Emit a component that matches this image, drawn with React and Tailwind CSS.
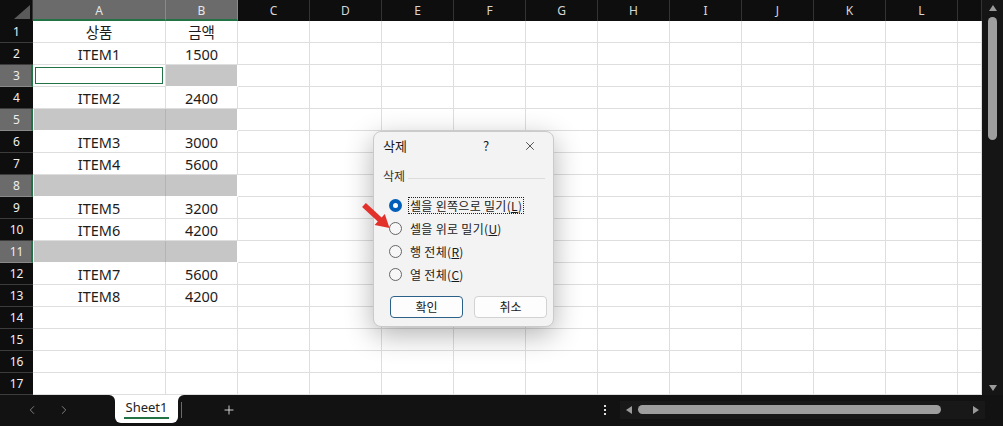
import React from "react";
import { ChevronLeft, ChevronRight, Plus, X } from "lucide-react";

const COLS = ["A", "B", "C", "D", "E", "F", "G", "H", "I", "J", "K", "L", ""];
const DATA = {
  1: ["상품", "금액"],
  2: ["ITEM1", "1500"],
  4: ["ITEM2", "2400"],
  6: ["ITEM3", "3000"],
  7: ["ITEM4", "5600"],
  9: ["ITEM5", "3200"],
  10: ["ITEM6", "4200"],
  12: ["ITEM7", "5600"],
  13: ["ITEM8", "4200"],
};
const SEL = [3, 5, 8, 11];
const ROWS = Array.from({ length: 17 }, (_, i) => i + 1);

function Cell({ r, c }) {
  const sel = SEL.includes(r) && c < 2;
  if (sel && r === 3 && c === 0) {
    return (
      <div className="bg-white border-r border-b border-[#dedede] p-[2px]">
        <div className="h-full w-full border border-[#217346]" />
      </div>
    );
  }
  if (sel && c === 0) {
    return <div className="bg-[#c6c6c6] border-r border-b border-r-[#b4b4b4] border-b-white shadow-[inset_1px_0_0_#ffffff]" />;
  }
  if (sel && c === 1) {
    return <div className="bg-[#c6c6c6] border-r border-b border-white" />;
  }
  const txt = DATA[r] && c < 2 ? DATA[r][c] : "";
  return (
    <div className="bg-white border-r border-b border-[#dedede] flex items-center justify-center text-[14.5px] leading-none text-[#1c1c1c] pt-[1px]">
      {txt}
    </div>
  );
}

function Radio({ checked }) {
  if (checked) {
    return (
      <div className="w-[13px] h-[13px] rounded-full bg-[#005fb8] flex items-center justify-center shrink-0">
        <div className="w-[5px] h-[5px] rounded-full bg-white" />
      </div>
    );
  }
  return <div className="w-[13px] h-[13px] rounded-full border border-[#666666] bg-[#f7f7f7] shrink-0" />;
}

function Tri({ dir, className }) {
  const pts = {
    up: "0,6 4,0 8,6",
    down: "0,0 8,0 4,6",
    left: "6,0 6,8 0,4",
    right: "0,0 0,8 6,4",
  }[dir];
  const vb = dir === "up" || dir === "down" ? "0 0 8 6" : "0 0 6 8";
  return (
    <svg viewBox={vb} className={className}>
      <polygon points={pts} fill="#9a9a9a" />
    </svg>
  );
}

export default function App() {
  const options = [
    { label: "셀을 왼쪽으로 밀기", key: "L", checked: true },
    { label: "셀을 위로 밀기", key: "U" },
    { label: "행 전체", key: "R" },
    { label: "열 전체", key: "C" },
  ];
  return (
    <div className="w-[1003px] h-[426px] overflow-hidden bg-[#121212] relative font-['Noto_Sans','Noto_Sans_CJK_KR',sans-serif]">
      <div className="flex h-[395px]">
        <div className="grid grid-cols-[33px_133px_repeat(11,72px)_24px] grid-rows-[21px_repeat(17,22px)] w-[982px]">
          <div className="bg-[#0e0e0e] border-r border-[#333333] flex items-end justify-end pr-[2px] pb-[2px]">
            <svg width="16" height="14" viewBox="0 0 16 14">
              <polygon points="16,0 16,14 0,14" fill="#5a5a5a" />
            </svg>
          </div>
          {COLS.map((l, i) =>
            i < 2 ? (
              <div key={i} className="bg-[#6b6b6b] border-r border-[#8a8a8a] border-b-2 border-b-[#217346] flex items-center justify-center text-[12px] text-[#e6e6e6] pt-[2px]">
                {l}
              </div>
            ) : (
              <div key={i} className="bg-[#0e0e0e] border-r border-[#333333] flex items-center justify-center text-[12px] text-[#d6d6d6]">
                {l}
              </div>
            )
          )}
          {ROWS.map((r) => (
            <React.Fragment key={r}>
              {SEL.includes(r) ? (
                <div className="bg-[#6b6b6b] border-b border-[#8a8a8a] border-r-2 border-r-[#217346] flex items-center justify-center text-[12px] text-[#eeeeee] pl-[2px]">
                  {r}
                </div>
              ) : (
                <div className="bg-[#0e0e0e] border-b border-[#3c3c3c] flex items-center justify-center text-[12px] text-[#f0f0f0]">
                  {r}
                </div>
              )}
              {COLS.map((_, c) => (
                <Cell key={c} r={r} c={c} />
              ))}
            </React.Fragment>
          ))}
        </div>
        <div className="w-[21px] bg-[#151515] flex flex-col items-center pt-[5px] pb-[4px]">
          <Tri dir="up" className="w-[8px] h-[6px]" />
          <div className="mt-[6px] w-[9px] h-[123px] rounded-full bg-[#9e9e9e]" />
          <div className="flex-1" />
          <Tri dir="down" className="w-[8px] h-[6px]" />
        </div>
      </div>

      <div className="flex h-[31px] bg-white">
        <div className="w-[115px] bg-[#121212] rounded-tr-[6px] flex items-center pl-[25px] pb-[2px]">
          <ChevronLeft size={14} strokeWidth={1.5} color="#8c8c8c" />
          <ChevronRight size={14} strokeWidth={1.5} color="#8c8c8c" className="ml-[18px]" />
        </div>
        <div className="w-[63px] bg-[#121212]">
          <div className="h-[28px] bg-white rounded-b-[6px] flex flex-col items-center pt-[3px]">
            <span className="text-[13px] leading-[18px] text-[#222222]">Sheet1</span>
            <div className="w-[45px] h-[2px] bg-[#217346] mt-[1px]" />
          </div>
        </div>
        <div className="flex-1 bg-[#121212] rounded-tl-[6px] flex items-center pb-[2px]">
          <div className="ml-[3px] w-px h-[16px] bg-[#6a6a6a]" />
          <Plus size={14} strokeWidth={1.5} color="#e6e6e6" className="ml-[40px]" />
          <div className="ml-[368px] flex flex-col gap-[2px]">
            <div className="w-[2px] h-[2px] bg-[#dddddd]" />
            <div className="w-[2px] h-[2px] bg-[#dddddd]" />
            <div className="w-[2px] h-[2px] bg-[#dddddd]" />
          </div>
          <div className="ml-[14px] w-[365px] h-[18px] bg-[#181818] flex items-center pl-[6px]">
            <Tri dir="left" className="w-[6px] h-[8px]" />
            <div className="ml-[6px] w-[303px] h-[9px] rounded-full bg-[#9e9e9e]" />
            <Tri dir="right" className="ml-[32px] w-[6px] h-[8px]" />
          </div>
        </div>
      </div>

      <div className="absolute left-[373px] top-[131px] w-[181px] h-[196px] bg-[#f3f3f3] rounded-[8px] border border-[#cacaca] shadow-[0_8px_28px_rgba(0,0,0,0.30)] flex flex-col text-[12px] text-[#1a1a1a] font-['Noto_Sans_CJK_KR','Noto_Sans',sans-serif]">
        <div className="h-[28px] flex items-center pl-[9px]">
          <span className="w-[98px] text-[13px]">삭제</span>
          <span className="w-[10px] text-center text-[13px]">?</span>
          <X size={14} strokeWidth={1.3} color="#222222" className="ml-[32px]" />
        </div>
        <div className="mt-[6px] h-[20px] flex items-center pl-[9px] pr-[8px]">
          <span className="text-[#333333]">삭제</span>
          <div className="ml-[3px] flex-1 h-px bg-[#dcdcdc] mt-[4px]" />
        </div>
        <div className="mt-[8px] flex flex-col">
          {options.map((o) => (
            <div key={o.key} className="h-[23px] flex items-center pl-[15px]">
              <Radio checked={o.checked} />
              <span className={"ml-[6px] border leading-[15px] px-px tracking-[0.3px] " + (o.checked ? "border-dotted border-[#222222]" : "border-transparent")}>
                {o.label}(<span className="underline">{o.key}</span>)
              </span>
            </div>
          ))}
        </div>
        <div className="mt-[10px] flex pl-[16px] gap-[11px]">
          <div className="w-[73px] h-[22px] rounded-[4px] border border-[#2b6189] bg-[#fdfdfd] flex items-center justify-center">확인</div>
          <div className="w-[73px] h-[22px] rounded-[4px] border border-[#d2d2d2] bg-[#fdfdfd] flex items-center justify-center">취소</div>
        </div>
      </div>

      <svg className="absolute left-[358px] top-[198px] w-[36px] h-[36px]" viewBox="0 0 36 36">
        <polygon points="7.9,4.94 23.6,19.44 26.8,16 31.5,30 16.6,27 19.8,23.56 4.1,9.06" fill="#e2312b" />
      </svg>
    </div>
  );
}
